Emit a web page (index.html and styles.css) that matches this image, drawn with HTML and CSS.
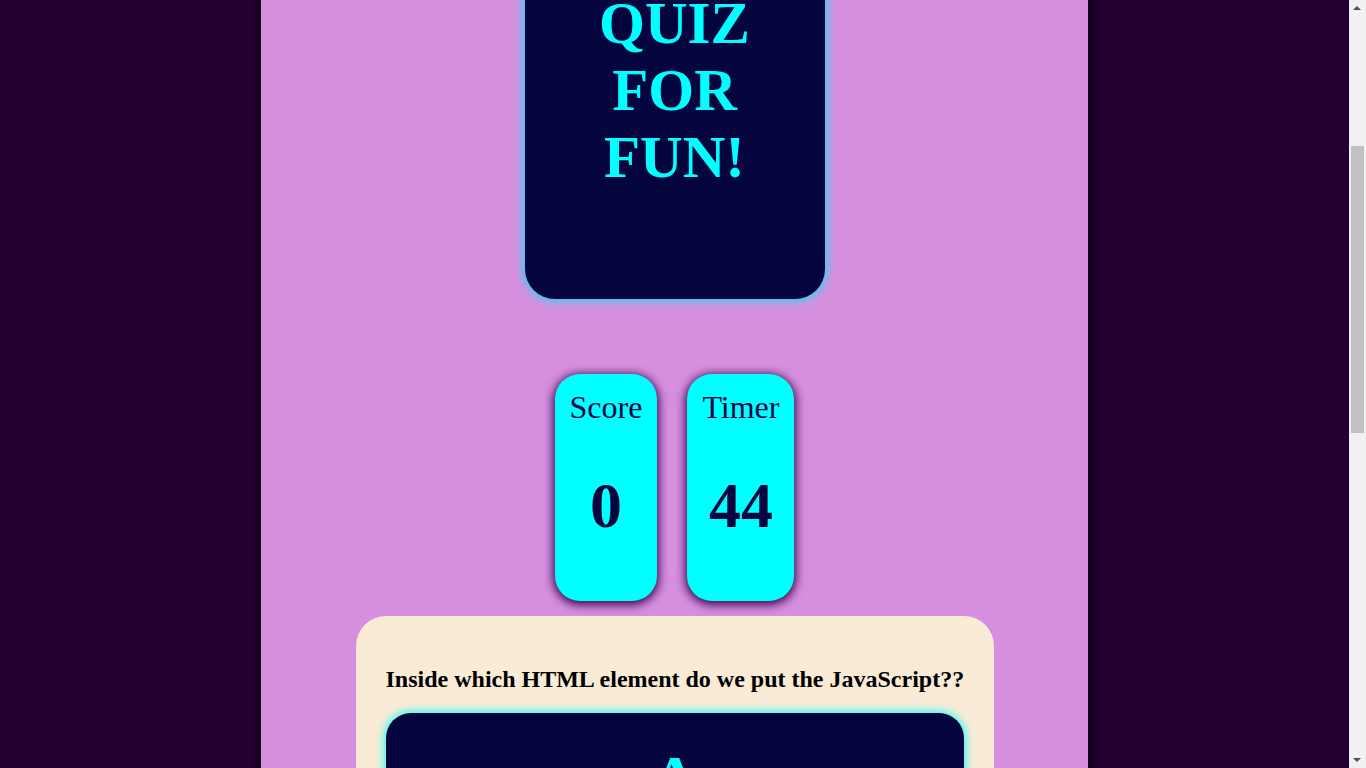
FILE: index.html
```html
<!DOCTYPE html>
<html lang="en">
<head>
<meta charset="utf-8">
<title>Quiz For Fun</title>
<link rel="stylesheet" href="styles.css">
</head>
<body>
<main class="page">
  <header class="title-box">
    <h1 class="title">QUIZ FOR FUN!</h1>
  </header>

  <section class="stats">
    <div class="stat">
      <div class="stat-label">Score</div>
      <div class="stat-value">0</div>
    </div>
    <div class="stat">
      <div class="stat-label">Timer</div>
      <div class="stat-value">44</div>
    </div>
  </section>

  <section class="quiz-card">
    <h2 class="question">Inside which HTML element do we put the JavaScript??</h2>
    <div class="answers">
      <button class="answer">A</button>
      <button class="answer">B</button>
      <button class="answer">C</button>
      <button class="answer">D</button>
    </div>
  </section>
</main>

<div class="scrollbar" aria-hidden="true">
  <span class="sb-arrow sb-up"></span>
  <span class="sb-thumb"></span>
  <span class="sb-arrow sb-down"></span>
</div>

<script src="script.js"></script>
</body>
</html>
```

FILE: styles.css
```css
html, body {
  margin: 0;
  padding: 0;
}

body {
  background: #230032;
  font-family: "Liberation Serif", "Times New Roman", serif;
  padding-right: 17px;
}

.page {
  width: 827px;
  margin: 0 auto;
  background: #d68fdf;
  box-shadow: 0 0 10px #000;
  padding: 40px 0 150px;
  box-sizing: border-box;
  display: flex;
  flex-direction: column;
  align-items: center;
}

.title-box {
  width: 300px;
  box-sizing: border-box;
  padding: 299px 30px 108px;
  background: #04043f;
  border-radius: 30px;
  box-shadow: 0 0 10px 1px #00e8ff;
}

.title {
  margin: 0;
  color: #00ffff;
  font-size: 59px;
  line-height: 67px;
  font-weight: bold;
  text-align: center;
}

.stats {
  display: flex;
  gap: 30px;
  margin-top: 75px;
}

.stat {
  background: #00ffff;
  color: #04043f;
  border-radius: 25px;
  padding: 15px 15px 58px;
  text-align: center;
  box-shadow: 0 2px 10px 2px #3a0650;
}

.stat-label {
  font-size: 32px;
  line-height: 37px;
}

.stat-value {
  margin-top: 43px;
  font-size: 64px;
  line-height: 74px;
  font-weight: bold;
}

.quiz-card {
  width: 638px;
  box-sizing: border-box;
  margin-top: 15px;
  padding: 30px;
  background: #faebd7;
  border-radius: 30px;
}

.question {
  margin: 20px 0;
  font-size: 24px;
  font-weight: bold;
  color: #000;
  text-align: center;
  white-space: nowrap;
}

.answers {
  display: flex;
  flex-direction: column;
  gap: 30px;
}

.answer {
  width: 100%;
  height: 160px;
  border: none;
  padding: 29px 20px 0;
  background: #04043f;
  color: #00ffff;
  font-family: "Liberation Serif", "Times New Roman", serif;
  font-size: 64px;
  font-weight: bold;
  line-height: normal;
  border-radius: 25px;
  box-shadow: 0 0 10px 1px #00ffff;
  display: flex;
  justify-content: center;
  align-items: flex-start;
}

/* imitation of the classic browser scrollbar shown in the capture */
.scrollbar {
  position: fixed;
  top: 0;
  right: 0;
  width: 17px;
  height: 100vh;
  background: #f1f1f1;
}

.sb-thumb {
  position: absolute;
  left: 2px;
  right: 2px;
  top: 146px;
  height: 287px;
  background: #c1c1c1;
}

.sb-arrow {
  position: absolute;
  left: 4px;
  width: 0;
  height: 0;
  border-left: 4px solid transparent;
  border-right: 4px solid transparent;
}

.sb-up {
  top: 6px;
  border-bottom: 4px solid #505050;
}

.sb-down {
  bottom: 6px;
  border-top: 4px solid #505050;
}
```

FILE: script.js
```js
window.scrollTo(0, 349);
window.addEventListener('load', function () {
  window.scrollTo(0, 349);
});
```
